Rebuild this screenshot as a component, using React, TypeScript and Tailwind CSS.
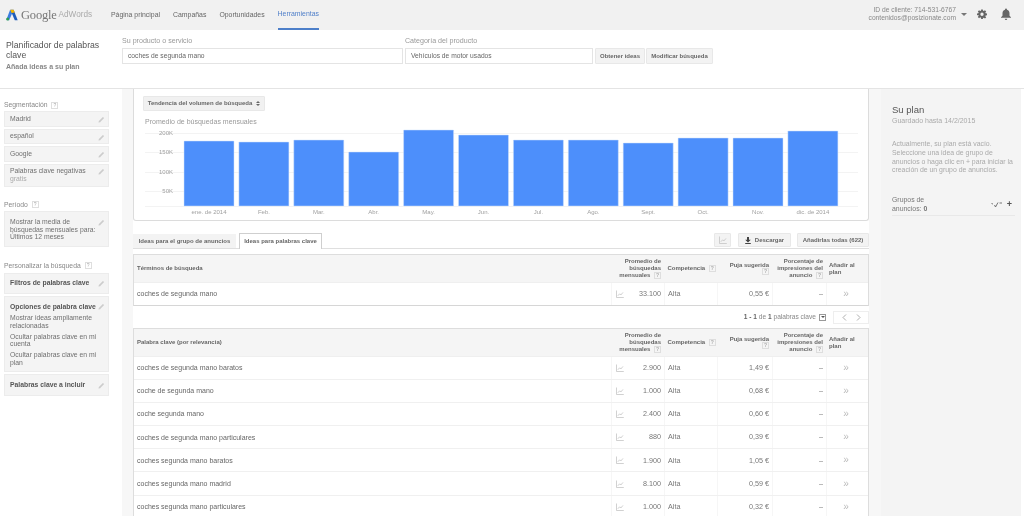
import React from "react";

const Help = () => (
  <span className="inline-flex items-center justify-center w-[7px] h-[7px] border border-[#dedede] text-[5px] leading-none text-[#aaa] align-middle ml-[2px]">?</span>
);

const Pencil = () => (
  <svg width="7" height="7" viewBox="0 0 8 8" className="shrink-0">
    <path d="M0.5 7.5 L1 5.6 L5.6 1 L7 2.4 L2.4 7 Z" fill="#cccccc" />
  </svg>
);

const Trend = () => (
  <svg width="8" height="8" viewBox="0 0 8 8" fill="none" stroke="#bdbdbd" strokeWidth="0.7">
    <path d="M0.5 0.5V7.5H7.8" />
    <path d="M1.8 5.8L3.6 3.8L4.8 5L7 2.4" />
  </svg>
);

const SideCard = ({ children, className = "" }: { children: React.ReactNode; className?: string }) => (
  <div className={`bg-[#f4f4f4] border border-[#ececec] flex justify-between pl-[5px] pr-[3px] whitespace-nowrap ${className}`}>
    <div className="min-w-0">{children}</div>
    <div className="pt-[1px]"><Pencil /></div>
  </div>
);

const bars = [
  ["ene. de 2014", 141], ["Feb.", 142], ["Mar.", 140], ["Abr.", 152], ["May.", 130], ["Jun.", 135],
  ["Jul.", 140], ["Ago.", 140], ["Sept.", 143], ["Oct.", 138], ["Nov.", 138], ["dic. de 2014", 131],
] as const;

const Chart = () => (
  <svg width="734" height="92" viewBox="134 126 734 92" className="block">
    {[133, 152, 172, 191, 206].map((y) => (
      <line key={y} x1="145" x2="858" y1={y + 0.5} y2={y + 0.5} stroke="#f3f3f3" strokeWidth="1" />
    ))}
    {[["200K", 133], ["150K", 152], ["100K", 172], ["50K", 191]].map(([t, y]) => (
      <text key={t} x="173" y={(y as number) + 2.2} textAnchor="end" fontSize="6" fill="#a0a0a0">{t}</text>
    ))}
    {bars.map(([m, top], i) => {
      const x = 184 + i * 54.9;
      return (
        <g key={m}>
          <rect x={x} y={top} width="50" height={206 - top} fill="#4d8ffb" stroke="#cfe0fb" strokeWidth="0.5" rx="0.5" />
          <text x={x + 25} y="214" textAnchor="middle" fontSize="6" fill="#a0a0a0">{m}</text>
        </g>
      );
    })}
  </svg>
);

const cols = "grid grid-cols-[477px_53px_53px_55px_54px_42px]";

const TableHead = ({ title }: { title: string }) => (
  <div className={`${cols} h-[28px] bg-[#f5f5f5] border-b border-[#efefef] text-[6px] leading-[6.800px] font-bold text-[#666] whitespace-nowrap`}>
    <div className="flex items-center pl-[3px]">{title}</div>
    <div className="flex items-center justify-end text-right pr-[3px]"><span>Promedio de<br />búsquedas<br />mensuales <Help /></span></div>
    <div className="flex items-center pl-[3.500px]"><span>Competencia <Help /></span></div>
    <div className="flex items-center justify-end text-right pr-[3px]"><span>Puja sugerida<br /><Help /></span></div>
    <div className="flex items-center justify-end text-right pr-[3px]"><span>Porcentaje de<br />impresiones del<br />anuncio <Help /></span></div>
    <div className="flex items-center pl-[3px]"><span>Añadir al<br />plan</span></div>
  </div>
);

const Row = ({ k, n, p, h, last }: { k: string; n: string; p: string; h: string; last?: boolean }) => (
  <div className={`${cols} ${h} text-[#777] text-[7.200px] ${last ? "" : "border-b border-[#f0f0f0]"}`}>
    <div className="flex items-center pl-[3px] pt-[1px] text-[#666] text-[7px]">{k}</div>
    <div className="flex items-center justify-between border-l border-[#f6f6f6] pl-[3.500px] pr-[3px]"><Trend /><span className="pt-[1px]">{n}</span></div>
    <div className="flex items-center border-l border-[#f6f6f6] pl-[3px] pt-[1px]">Alta</div>
    <div className="flex items-center justify-end border-l border-[#f6f6f6] pr-[3px] pt-[1px]">{p}</div>
    <div className="flex items-center justify-end border-l border-[#f6f6f6] pr-[3px] pt-[1px]">–</div>
    <div className="flex items-center justify-center border-l border-[#f6f6f6] pr-[3px] text-[#bbbbbb] text-[10px] leading-none">»</div>
  </div>
);

const rows = [
  ["coches de segunda mano baratos", "2.900", "1,49 €"],
  ["coche de segunda mano", "1.000", "0,68 €"],
  ["coche segunda mano", "2.400", "0,60 €"],
  ["coches de segunda mano particulares", "880", "0,39 €"],
  ["coches segunda mano baratos", "1.900", "1,05 €"],
  ["coches segunda mano madrid", "8.100", "0,59 €"],
  ["coches segunda mano particulares", "1.000", "0,32 €"],
];

const Btn = ({ children, className = "" }: { children: React.ReactNode; className?: string }) => (
  <div className={`bg-[#f3f3f3] border border-[#e8e8e8] rounded-[1px] flex items-center justify-center font-bold text-[6px] text-[#666] whitespace-nowrap ${className}`}>{children}</div>
);

export default function App() {
  return (
    <div className="w-[1024px] h-[516px] overflow-hidden bg-white flex flex-col blur-[0.3px] [font-family:'Liberation_Sans',Arial,sans-serif] text-[#666]">
      {/* top bar */}
      <header className="h-[30px] shrink-0 bg-[#f1f1f1] flex items-stretch pl-[6px]">
        <div className="flex items-center w-[105px] shrink-0">
          <svg width="12" height="12" viewBox="0 0 12 12" className="mr-[3px]">
            <path d="M0.300 11 L4 1 L6.800 2.800 L3.200 11.300 Z" fill="#3b7de0" />
            <path d="M4.300 0.800 H7.600 L11.700 11.300 H8.800 Z" fill="#1f5dbb" />
            <path d="M4.300 0.800 H7.600 L8.700 3.600 L5.500 4 Z" fill="#f2b600" />
            <circle cx="1.700" cy="10" r="1.500" fill="#2f9e4f" />
          </svg>
          <span className="[font-family:'Liberation_Serif',serif] text-[12.500px] text-[#777] tracking-[-0.2px]">Google</span>
          <span className="ml-[2px] text-[8.200px] text-[#aaa]">AdWords</span>
        </div>
        <nav className="flex gap-[13px] text-[6.900px] text-[#666] items-stretch">
          <span className="flex items-center">Página principal</span>
          <span className="flex items-center">Campañas</span>
          <span className="flex items-center">Oportunidades</span>
          <span className="flex items-center text-[#4f7fc9] border-b-2 border-[#4d7fc9]">Herramientas</span>
        </nav>
        <div className="ml-auto flex items-center pr-[13px] pb-[2px]">
          <div className="text-right text-[6.700px] leading-[8.500px] text-[#888]">ID de cliente: 714-531-6767<br />contenidos@posizionate.com</div>
          <div className="ml-[5px] w-0 h-0 border-x-[3px] border-x-transparent border-t-[3px] border-t-[#777]" />
          <svg width="10" height="10" viewBox="0 0 24 24" className="ml-[10px]" fill="#666">
            <path fillRule="evenodd" d="M10 1h4l.6 3.2 1.800.8L19.100 3l2.900 2.900-2 2.700.8 1.800L24 11v4l-3.200.5-.8 1.900 2 2.700-2.900 2.900-2.700-2-1.800.8L14 24h-4l-.6-3.200-1.800-.8-2.700 2L2 19.100l2-2.700-.8-1.900L0 15v-4l3.200-.6.8-1.800-2-2.700L4.900 3l2.700 2 1.800-.8zM12 8.500a4 4 0 100 8 4 4 0 000-8z" />
          </svg>
          <svg width="10" height="12" viewBox="0 0 20 24" className="ml-[14px]" fill="#666">
            <path d="M10 1a2 2 0 012 2v.6c3.400.8 5 3.600 5 7v5l3 3v1H0v-1l3-3v-5c0-3.400 1.600-6.200 5-7V3a2 2 0 012-2zM7.500 21.500h5a2.500 2.500 0 01-5 0z" />
          </svg>
        </div>
      </header>

      {/* planner band */}
      <section className="h-[59px] shrink-0 bg-white border-b border-[#e4e4e4] flex">
        <div className="w-[122px] shrink-0 pl-[6px] pt-[10px]">
          <div className="text-[8.700px] leading-[10px] text-[#555]">Planificador de palabras<br />clave</div>
          <div className="mt-[2px] text-[7px] leading-[9px] font-bold text-[#888]">Añada ideas a su plan</div>
        </div>
        <div className="pt-[7px] flex gap-[2px] items-end self-start">
          <div className="w-[281px]">
            <div className="text-[7.100px] leading-[9px] text-[#999] mb-[2px]">Su producto o servicio</div>
            <div className="h-[16px] border border-[#e4e4e4] pl-[5px] flex items-center text-[6.700px] text-[#666]">coches de segunda mano</div>
          </div>
          <div className="w-[188px]">
            <div className="text-[7.100px] leading-[9px] text-[#999] mb-[2px]">Categoría del producto</div>
            <div className="h-[16px] border border-[#e4e4e4] pl-[5px] flex items-center text-[6.700px] text-[#666]">Vehículos de motor usados</div>
          </div>
          <div className="flex gap-[1px]">
            <Btn className="w-[50px] h-[16px]">Obtener ideas</Btn>
            <Btn className="w-[67px] h-[16px]">Modificar búsqueda</Btn>
          </div>
        </div>
      </section>

      <div className="flex-1 flex min-h-0">
        {/* left sidebar */}
        <aside className="w-[122px] shrink-0 pl-[4px] pr-[13px] pt-[11px] text-[6.800px] text-[#707070]">
          <div className="leading-[9px] text-[#888] mb-[2px]">Segmentación <Help /></div>
          <div className="flex flex-col gap-[2px]">
            <SideCard className="h-[15.700px] items-center"><span>Madrid</span></SideCard>
            <SideCard className="h-[15.700px] items-center"><span>español</span></SideCard>
            <SideCard className="h-[15.700px] items-center"><span>Google</span></SideCard>
            <SideCard className="h-[23px] pt-[2px]"><div className="leading-[8px]">Palabras clave negativas</div><div className="leading-[8px] text-[#aaa]">gratis</div></SideCard>
          </div>
          <div className="leading-[9px] text-[#888] mt-[12.500px] mb-[2.500px]">Período <Help /></div>
          <SideCard className="h-[36px] pt-[6px]"><div className="leading-[7.600px]">Mostrar la media de<br />búsquedas mensuales para:<br />Últimos 12 meses</div></SideCard>
          <div className="leading-[9px] text-[#888] mt-[13.500px] mb-[3px]">Personalizar la búsqueda <Help /></div>
          <div className="flex flex-col gap-[2.300px]">
            <SideCard className="h-[21.500px] items-center"><b className="text-[#555]">Filtros de palabras clave</b></SideCard>
            <SideCard className="h-[75.500px] pt-[5px]">
              <b className="block leading-[9px] text-[#555]">Opciones de palabra clave</b>
              <div className="leading-[7.600px] mt-[3px]">Mostrar ideas ampliamente<br />relacionadas</div>
              <div className="leading-[7.600px] mt-[3px]">Ocultar palabras clave en mi<br />cuenta</div>
              <div className="leading-[7.600px] mt-[3.500px]">Ocultar palabras clave en mi<br />plan</div>
            </SideCard>
            <SideCard className="h-[22px] items-center"><b className="text-[#555]">Palabras clave a incluir</b></SideCard>
          </div>
        </aside>

        {/* gutter + main */}
        <main className="w-[759px] shrink-0 flex">
          <div className="w-[11px] bg-[#f7f7f7] shrink-0" />
          <div className="w-[736px] shrink-0 flex flex-col">
            {/* chart card */}
            <div className="h-[132px] border-x border-b border-[#dcdcdc] rounded-b-[3px] pt-[7px] flex flex-col">
              <div className="pl-[9px]">
                <div className="w-[122px] h-[15px] bg-[#f1f1f1] border border-[#e8e8e8] rounded-[1px] flex items-center justify-center gap-[4px] text-[6px] font-bold text-[#666] whitespace-nowrap">
                  Tendencia del volumen de búsqueda
                  <span className="flex flex-col gap-[1px]">
                    <span className="w-0 h-0 border-x-[2px] border-x-transparent border-b-[2px] border-b-[#666]" />
                    <span className="w-0 h-0 border-x-[2px] border-x-transparent border-t-[2px] border-t-[#666]" />
                  </span>
                </div>
              </div>
              <div className="pl-[11px] mt-[6px] text-[7px] leading-[10px] text-[#999]">Promedio de búsquedas mensuales</div>
              <div className="mt-[-1px]"><Chart /></div>
            </div>

            {/* tabs row */}
            <div className="h-[28px] shrink-0 flex items-end border-b border-[#dfdfdf] text-[6px] font-bold text-[#666] whitespace-nowrap">
              <div className="w-[103px] h-[14px] bg-[#f3f3f3] flex items-center justify-center">Ideas para el grupo de anuncios</div>
              <div className="ml-[3px] w-[83px] h-[16px] -mb-px bg-white border-x border-t border-[#cfcfcf] flex items-center justify-center">Ideas para palabras clave</div>
              <div className="ml-auto flex gap-[7px] self-end pb-[1px]">
                <Btn className="w-[17px] h-[14px]"><Trend /></Btn>
                <div className="flex gap-[6px]">
                  <Btn className="w-[53px] h-[14px] gap-[4px]">
                    <svg width="6" height="7" viewBox="0 0 6 7" fill="#444"><path d="M2 0h2v2.800h1.800L3 5.400 0.200 2.800H2zM0.200 6h5.600v1H0.200z" /></svg>
                    Descargar
                  </Btn>
                  <Btn className="w-[72px] h-[14px]">Añadirlas todas (622)</Btn>
                </div>
              </div>
            </div>

            {/* table 1 */}
            <div className="mt-[5px] border border-[#dddddd] border-b-[#d6d6d6]">
              <TableHead title="Términos de búsqueda" />
              <Row k="coches de segunda mano" n="33.100" p="0,55 €" h="h-[22px]" last />
            </div>

            {/* pagination */}
            <div className="h-[22px] shrink-0 flex items-center justify-end text-[6.600px] text-[#888] whitespace-nowrap">
              <span><b className="text-[#666]">1 - 1</b> de <b className="text-[#666]">1</b> palabras clave</span>
              <span className="ml-[3px] w-[7px] h-[7px] border border-[#999] flex items-center justify-center">
                <span className="w-0 h-0 border-x-[2px] border-x-transparent border-t-[2px] border-t-[#555]" />
              </span>
              <div className="ml-[7px] w-[36px] h-[13px] border border-[#eeeeee] flex items-center justify-around px-[3px]">
                <svg width="5" height="7" viewBox="0 0 5 7" fill="none" stroke="#999" strokeWidth="0.8"><path d="M4 0.500L1 3.500L4 6.500" /></svg>
                <svg width="5" height="7" viewBox="0 0 5 7" fill="none" stroke="#999" strokeWidth="0.8"><path d="M1 0.500L4 3.500L1 6.500" /></svg>
              </div>
            </div>

            {/* table 2 */}
            <div className="border-x border-t border-[#dddddd] flex-1 min-h-0 overflow-hidden">
              <TableHead title="Palabra clave (por relevancia)" />
              {rows.map(([k, n, p]) => (
                <Row key={k} k={k} n={n} p={p} h="h-[23.100px]" />
              ))}
            </div>
          </div>
          <div className="w-[12px] bg-[#f7f7f7] shrink-0" />
        </main>

        {/* right panel */}
        <aside className="w-[140px] shrink-0 bg-[#f4f4f4] pl-[11px] pr-[6px] pt-[15px] whitespace-nowrap">
          <div className="text-[9.500px] leading-[12px] text-[#555]">Su plan</div>
          <div className="text-[7px] leading-[9px] text-[#aaa]">Guardado hasta 14/2/2015</div>
          <div className="mt-[15px] text-[6.900px] leading-[8.800px] text-[#aaa]">
            Actualmente, su plan está vacío.<br />Seleccione una idea de grupo de<br />anuncios o haga clic en + para iniciar la<br />creación de un grupo de anuncios.
          </div>
          <div className="mt-[21px] pb-[2px] border-b border-[#e8e8e8] flex items-center justify-between text-[6.900px] leading-[8.500px] text-[#777]">
            <div>Grupos de<br />anuncios: <b>0</b></div>
            <div className="flex items-center gap-[4px] pr-[3px] text-[#555]">
              <svg width="12" height="6" viewBox="0 0 12 6" fill="none" stroke="#666" strokeWidth="0.9"><path d="M0.500 1.500l1.500 .5M3.500 3l1 2 2.500-4.500M8.500 1h2.500" /></svg>
              <span className="font-bold text-[9px] leading-none">+</span>
            </div>
          </div>
        </aside>
      </div>
    </div>
  );
}
